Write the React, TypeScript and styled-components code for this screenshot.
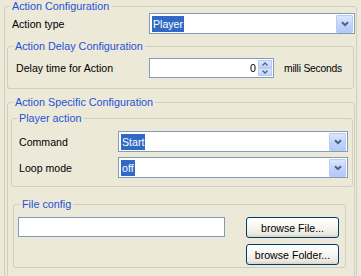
import React from 'react';
import styled, { createGlobalStyle } from 'styled-components';

const GlobalStyle = createGlobalStyle`
  html, body {
    margin: 0;
    padding: 0;
    background: #ece9d8;
    overflow: hidden;
  }
  body {
    font-family: "Liberation Sans", Arial, sans-serif;
    font-size: 10.6px;
    color: #000;
  }
`;

const Page = styled.div`
  padding-left: 4px;
  width: 361px;
  height: 276px;
  box-sizing: border-box;
  overflow: hidden;
`;

const Group = styled.fieldset`
  margin: 0;
  min-width: 0;
  min-inline-size: 0;
  box-sizing: border-box;
  border: 1px solid #d0d0bf;
  border-radius: 3px;
`;

const Legend = styled.legend<{ $shift?: number }>`
  padding: 0 2px;
  margin-left: ${p => p.$shift ?? 0}px;
  line-height: 13px;
  height: 13px;
  color: #1f52d6;
  font-size: 10.8px;
`;

const OuterGroup = styled(Group)`
  width: 353px;
  padding: 0 0 10px 2px;
`;

const DelayGroup = styled(Group)`
  margin: 6px 2px 0 0;
  padding: 5px 0 10px 5px;
`;

const SpecificGroup = styled(Group)`
  margin: 7px 1px 0 0;
  padding: 0 1px 20px 3px;
`;

const PlayerGroup = styled(Group)`
  margin-top: 3px;
  padding: 6px 4px 8px 5px;
  display: flex;
  flex-direction: column;
  gap: 5px;
`;

const FileGroup = styled(Group)`
  margin: 11px 0 0 2px;
  width: 333px;
  padding: 6px 6px 2px 4px;
`;

const Row = styled.div<{ $indent?: number }>`
  display: flex;
  align-items: center;
  padding-left: ${p => p.$indent ?? 0}px;
`;

const Label = styled.span<{ $width: number; $pad?: number }>`
  box-sizing: border-box;
  width: ${p => p.$width}px;
  padding-left: ${p => p.$pad ?? 0}px;
  flex-shrink: 0;
  white-space: nowrap;
`;

const Unit = styled.span`
  font-size: 10.3px;
  letter-spacing: -0.2px;
  white-space: nowrap;
`;

const Combo = styled.div<{ $mr?: number }>`
  flex: 1;
  height: 21px;
  margin-right: ${p => p.$mr ?? 0}px;
  box-sizing: border-box;
  border: 1px solid #7f9db9;
  background: #fff;
  display: flex;
  align-items: center;
  padding: 1px;
`;

const ComboText = styled.div`
  flex: 1;
  display: flex;
  align-items: center;
  padding-left: 1px;
`;

const Selected = styled.span`
  background: #316ac5;
  color: #fff;
  padding: 0 1px;
  line-height: 16px;
`;

const DropButton = styled.div`
  width: 17px;
  height: 18px;
  box-sizing: border-box;
  border: 1px solid #b9cbf3;
  border-radius: 1px;
  background: linear-gradient(180deg, #dce6fd 0%, #c6d6fb 45%, #b3c8f6 100%);
  display: flex;
  align-items: center;
  justify-content: center;
`;

const Spinner = styled.div`
  width: 125px;
  height: 20px;
  box-sizing: border-box;
  border: 1px solid #7f9db9;
  background: #fff;
  display: flex;
  align-items: center;
  padding: 1px;
  margin-right: 10px;
`;

const SpinValue = styled.span`
  flex: 1;
  text-align: right;
  padding-right: 2px;
`;

const SpinButtons = styled.div`
  width: 14px;
  height: 16px;
  display: flex;
  flex-direction: column;
`;

const SpinButton = styled.div`
  flex: 1;
  box-sizing: border-box;
  border: 1px solid #b9cbf3;
  background: linear-gradient(180deg, #dce6fd 0%, #c3d4fb 100%);
  display: flex;
  align-items: center;
  justify-content: center;
`;

const FileRow = styled.div`
  display: flex;
  justify-content: space-between;
  align-items: flex-start;
`;

const TextBox = styled.input`
  width: 207px;
  height: 20px;
  box-sizing: border-box;
  border: 1px solid #7f9db9;
  background: #fff;
  margin: 0;
  padding: 0 2px;
  outline: none;
`;

const ButtonColumn = styled.div`
  display: flex;
  flex-direction: column;
  gap: 6px;
`;

const XPButton = styled.button`
  width: 93px;
  height: 21px;
  box-sizing: border-box;
  border: 1px solid #003c74;
  border-radius: 3px;
  padding: 0;
  background: linear-gradient(180deg, #ffffff 0%, #f7f6f1 45%, #ebe8dd 85%, #d8d2c5 100%);
  font-family: "Liberation Sans", Arial, sans-serif;
  font-size: 10.6px;
  color: #000;
`;

const Chevron = () => (
  <svg width="8" height="6" viewBox="0 0 8 6">
    <path d="M1 1.2 L4 4.2 L7 1.2" fill="none" stroke="#4d6185" strokeWidth="2" />
  </svg>
);

const SpinArrow = ({ up }: { up?: boolean }) => (
  <svg width="6" height="4" viewBox="0 0 6 4">
    <path d={up ? 'M0.5 3.5 L3 1 L5.5 3.5' : 'M0.5 0.5 L3 3 L5.5 0.5'} fill="none" stroke="#4d6185" strokeWidth="1.3" />
  </svg>
);

const ComboBox = ({ value, mr }: { value: string; mr?: number }) => (
  <Combo $mr={mr}>
    <ComboText>
      <Selected>{value}</Selected>
    </ComboText>
    <DropButton>
      <Chevron />
    </DropButton>
  </Combo>
);

const App = () => {
  return (
    <>
      <GlobalStyle />
      <Page>
        <OuterGroup>
          <Legend $shift={3}>Action Configuration</Legend>
          <Row $indent={5}>
            <Label $width={137}>Action type</Label>
            <ComboBox value="Player" mr={1} />
          </Row>

          <DelayGroup>
            <Legend>Action Delay Configuration</Legend>
            <Row>
              <Label $width={136} $pad={3}>Delay time for Action</Label>
              <Spinner>
                <SpinValue>0</SpinValue>
                <SpinButtons>
                  <SpinButton><SpinArrow up /></SpinButton>
                  <SpinButton><SpinArrow /></SpinButton>
                </SpinButtons>
              </Spinner>
              <Unit>milli Seconds</Unit>
            </Row>
          </DelayGroup>

          <SpecificGroup>
            <Legend $shift={2}>Action Specific Configuration</Legend>
            <PlayerGroup>
              <Legend>Player action</Legend>
              <Row>
                <Label $width={101} $pad={2}>Command</Label>
                <ComboBox value="Start" />
              </Row>
              <Row>
                <Label $width={101} $pad={2}>Loop mode</Label>
                <ComboBox value="off" />
              </Row>
            </PlayerGroup>

            <FileGroup>
              <Legend $shift={2}>File config</Legend>
              <FileRow>
                <TextBox defaultValue="" />
                <ButtonColumn>
                  <XPButton>browse File...</XPButton>
                  <XPButton>browse Folder...</XPButton>
                </ButtonColumn>
              </FileRow>
            </FileGroup>
          </SpecificGroup>
        </OuterGroup>
      </Page>
    </>
  );
};

export default App;
